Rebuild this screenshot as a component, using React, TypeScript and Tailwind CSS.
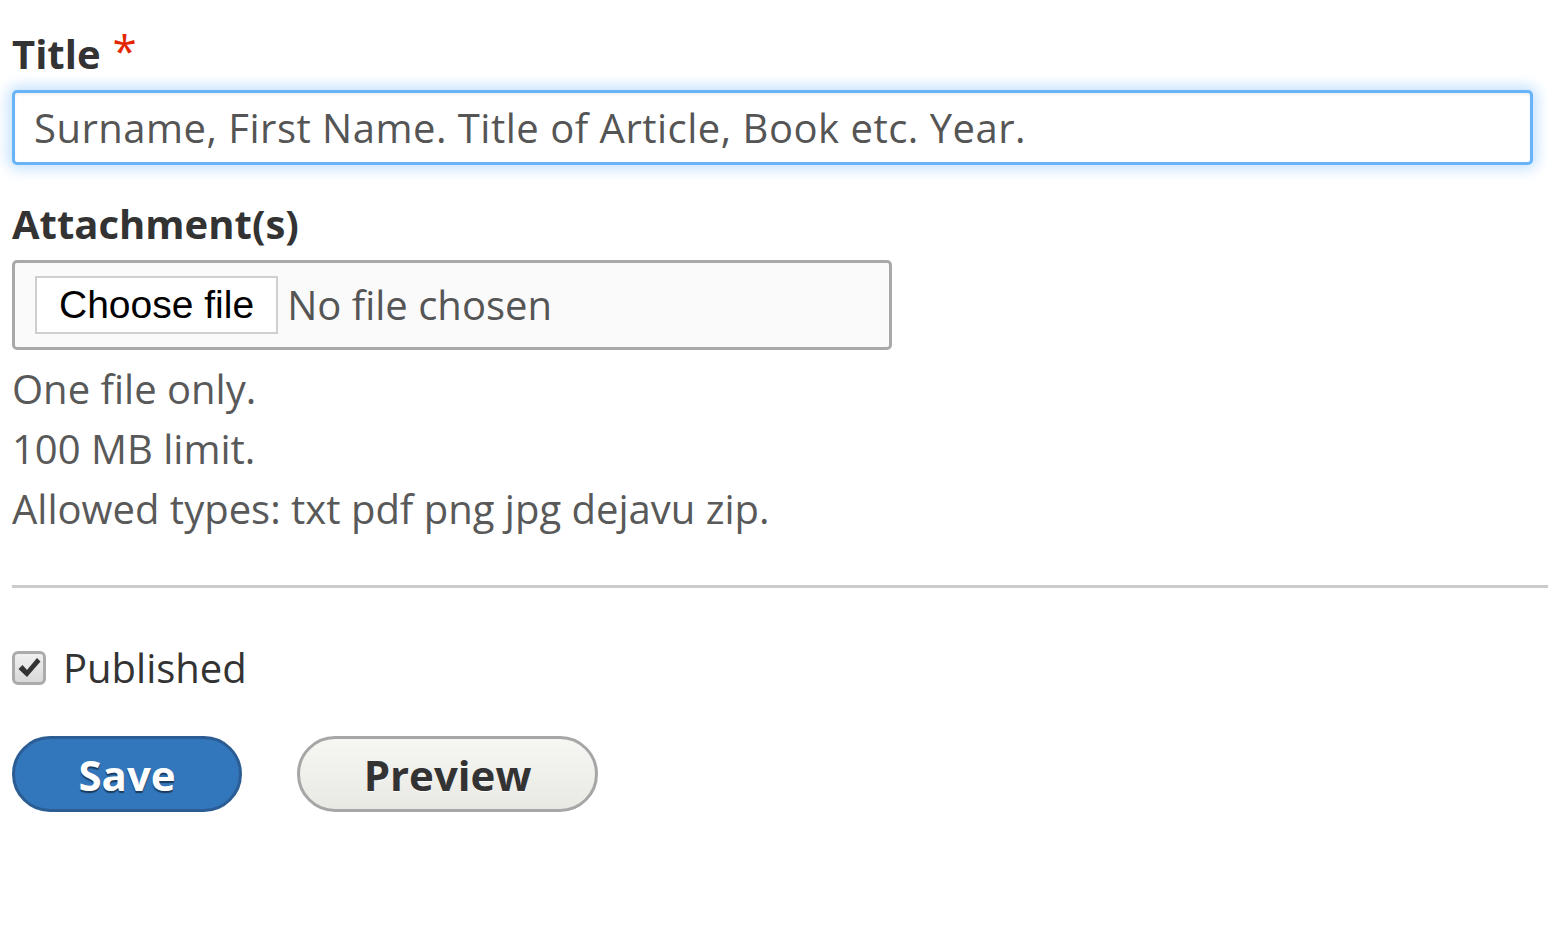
export default function App() {
  const font = { fontFamily: '"Open Sans", "Liberation Sans", sans-serif' }
  return (
    <div className="min-h-screen w-[1548px] bg-white pl-3 pt-[30px] text-[#333]" style={font}>
      <label className="flex items-start gap-[12px] text-[40px] font-bold leading-[48px] text-[#333]">
        Title
        <span className="mt-[-4px] text-[44px] font-normal text-[#e32700]">*</span>
      </label>
      <div className="mt-[12px] mr-[15px] flex h-[75px] items-center rounded-[5px] border-[3px] border-[#69b3f9] bg-white pl-[19px] shadow-[0_0_14px_4px_rgba(105,179,249,0.4),inset_0_2px_3px_rgba(0,0,0,0.06)]">
        <span className="text-[40px] tracking-[0.5px] text-[#555]">Surname, First Name. Title of Article, Book etc. Year.</span>
      </div>
      <div className="mt-[35px] text-[40px] font-bold leading-[48px] text-[#333]">Attachment(s)</div>
      <div className="mt-[12px] flex h-[90px] w-[880px] items-center rounded-[5px] border-[3px] border-[#a9a9a9] bg-[#fafafa] pl-[20px]">
        <div
          className="flex h-[58px] items-center border-2 border-[#cfcfcf] bg-white px-[22px] text-[39px] text-black"
          style={{ fontFamily: '"Liberation Sans", Arial, sans-serif' }}
        >
          Choose file
        </div>
        <span className="ml-[9px] text-[40px] text-[#555]">No file chosen</span>
      </div>
      <div className="mt-[9px] flex flex-col text-[40px] leading-[60px] text-[#595959]">
        <span>One file only.</span>
        <span>100 MB limit.</span>
        <span>Allowed types: txt pdf png jpg dejavu zip.</span>
      </div>
      <div className="mt-[46px] h-[3px] bg-[#cccccc]" />
      <div className="mt-[56px] flex items-center gap-[17px]">
        <div className="flex h-[34px] w-[34px] items-center justify-center rounded-[6px] border-[3px] border-[#ababab] bg-linear-to-b from-[#f0f0f0] to-[#d9d9d9]">
          <svg width="24" height="22" viewBox="0 0 24 22">
            <path d="M1.5 12 L5.5 8 L10 13 L20 1 L23.5 4.5 L10 20 Z" fill="#333" />
          </svg>
        </div>
        <span className="text-[40px] leading-[48px] text-[#333]">Published</span>
      </div>
      <div className="mt-[44px] flex items-center gap-[55px]">
        <button className="flex h-[76px] w-[230px] items-center justify-center rounded-full border-[3px] border-[#2b5d94] bg-[#3276bc] text-[42px] font-bold text-white [text-shadow:0_2px_1px_rgba(0,0,0,0.5)]">
          Save
        </button>
        <button className="flex h-[76px] w-[301px] items-center justify-center rounded-full border-[3px] border-[#a6a6a6] bg-linear-to-b from-[#f6f6f3] to-[#e9e9e4] text-[42px] font-bold text-[#333] [text-shadow:0_1px_0_rgba(255,255,255,0.9)]">
          Preview
        </button>
      </div>
    </div>
  )
}
